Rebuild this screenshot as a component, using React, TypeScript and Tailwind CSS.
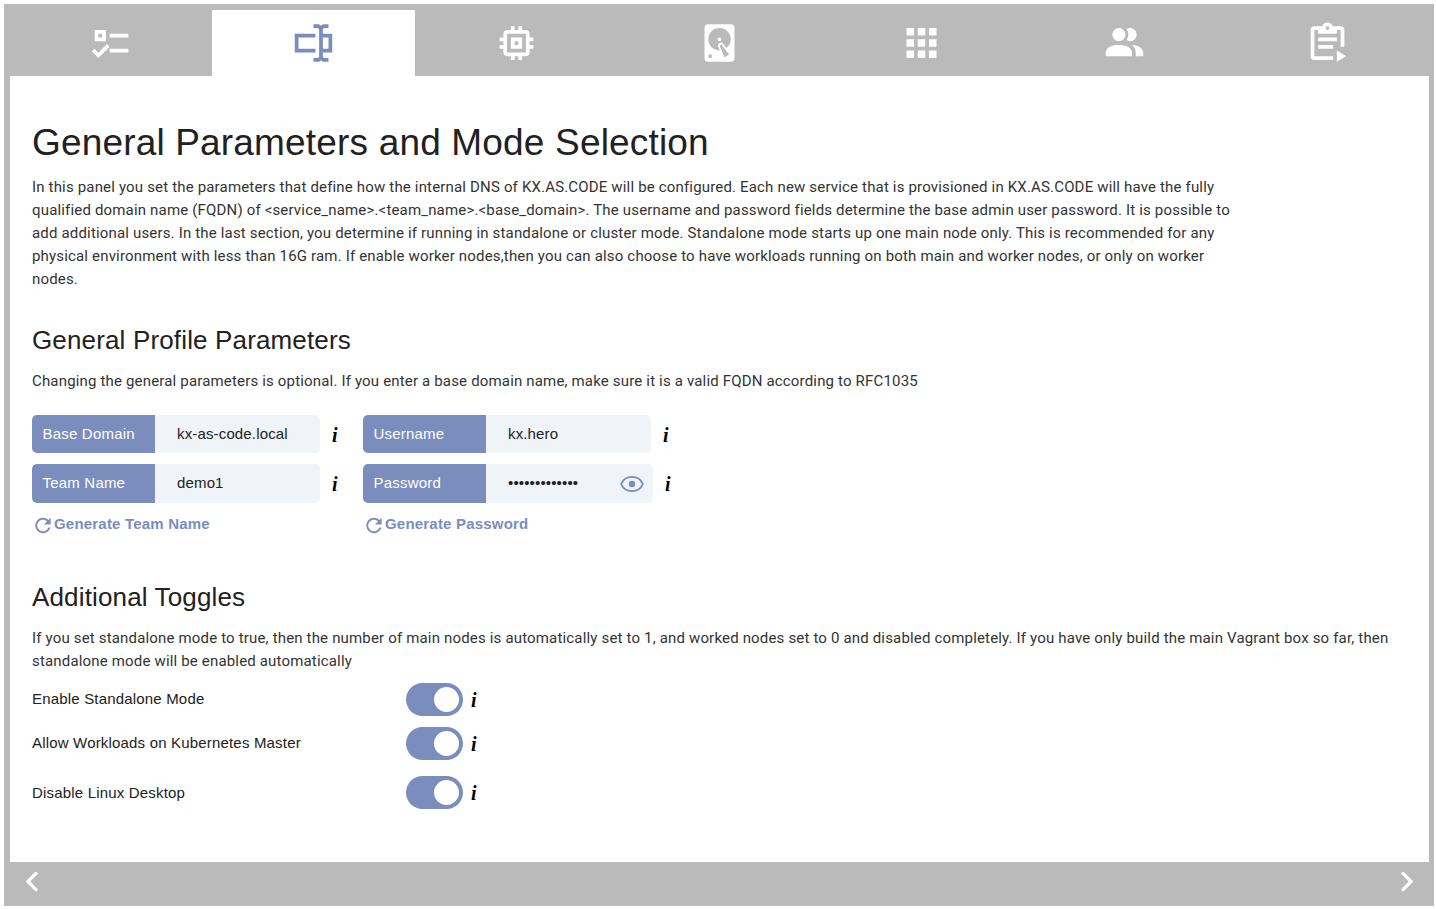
import type { ReactNode } from "react";

const tabs = [
  { name: "prerequisites", path: "M3,5H9V11H3V5M5,7V9H7V7H5M11,7H21V9H11V7M11,15H21V17H11V15M5,20L1.5,16.5L2.91,15.09L5,17.17L9.59,12.59L11,14L5,20Z" },
  { name: "general", path: "M17,7H22V17H17V19A1,1 0 0,0 18,20H20V22H17.5C16.95,22 16,21.55 16,21C16,21.55 15.05,22 14.5,22H12V20H14A1,1 0 0,0 15,19V5A1,1 0 0,0 14,4H12V2H14.5C15.05,2 16,2.45 16,3C16,2.45 16.95,2 17.5,2H20V4H18A1,1 0 0,0 17,5V7M2,7H13V9H4V15H13V17H2V7M20,15V9H17V15H20Z" },
  { name: "resources", path: "M15 9H9v6h6V9zm-2 4h-2v-2h2v2zm8-2V9h-2V7c0-1.1-.9-2-2-2h-2V3h-2v2h-2V3H9v2H7c-1.1 0-2 .9-2 2v2H3v2h2v2H3v2h2v2c0 1.1.9 2 2 2h2v2h2v-2h2v2h2v-2h2c1.1 0 2-.9 2-2v-2h2v-2h-2v-2h2zm-4 6H7V7h10v10z" },
  { name: "storage", path: "M6,2H18A2,2 0 0,1 20,4V20A2,2 0 0,1 18,22H6A2,2 0 0,1 4,20V4A2,2 0 0,1 6,2M12,4A6,6 0 0,0 6,10C6,13.31 8.69,16 12.1,16L11.22,13.77C10.95,13.29 11.11,12.68 11.59,12.4L12.45,11.9C12.93,11.63 13.54,11.79 13.82,12.27L15.74,14.69C17.12,13.59 18,11.9 18,10A6,6 0 0,0 12,4M12,9A1,1 0 0,1 13,10A1,1 0 0,1 12,11A1,1 0 0,1 11,10A1,1 0 0,1 12,9M7,18A1,1 0 0,0 6,19A1,1 0 0,0 7,20A1,1 0 0,0 8,19A1,1 0 0,0 7,18M12.09,13.27L14.58,19.58L17.17,18.08L12.95,12.77L12.09,13.27Z" },
  { name: "applications", path: "M4 8h4V4H4v4zm6 12h4v-4h-4v4zm-6 0h4v-4H4v4zm0-6h4v-4H4v4zm6 0h4v-4h-4v4zm6-10v4h4V4h-4zm-6 4h4V4h-4v4zm6 6h4v-4h-4v4zm0 6h4v-4h-4v4z" },
  { name: "users", path: "M16 17V19H2V17S2 13 9 13 16 17 16 17M12.5 7.5A3.5 3.5 0 1 0 9 11A3.5 3.5 0 0 0 12.5 7.5M15.94 13A5.32 5.32 0 0 1 18 17V19H22V17S22 13.37 15.94 13M15 4A3.39 3.39 0 0 0 13.07 4.59A5 5 0 0 1 13.07 10.41A3.39 3.39 0 0 0 15 11A3.5 3.5 0 0 0 15 4Z" },
  { name: "review", path: "M12 1C10.7 1 9.6 1.84 9.18 3H5A2 2 0 0 0 3 5V19A2 2 0 0 0 5 21H15V19H5V5H7V7H17V5H19V14H21V5A2 2 0 0 0 19 3H14.82C14.4 1.84 13.3 1 12 1M12 3A1 1 0 0 1 12 5A1 1 0 0 1 12 3M7 9H17V11H7V9M7 13H15V15H7V13M17 16V22L22 19L17 16Z" },
];

function Glyph({ d, className }: { d: string; className: string }) {
  return (
    <svg viewBox="0 0 24 24" className={className} fill="currentColor" fillRule="evenodd" aria-hidden="true">
      <path d={d} />
    </svg>
  );
}

function Chevron({ d }: { d: string }) {
  return (
    <svg viewBox="0 0 24 24" className="size-[38px] -translate-y-[0.5px]" fill="none" stroke="currentColor" strokeWidth="2.1" strokeLinecap="round" aria-hidden="true">
      <path d={d} />
    </svg>
  );
}

function Info() {
  return (
    <span className="w-[7px] font-['Liberation_Serif',serif] text-[20px] leading-[22px] font-bold text-black italic">i</span>
  );
}

function Field({ label, children, tall = false, wide = false }: { label: string; children: ReactNode; tall?: boolean; wide?: boolean }) {
  return (
    <div className={tall ? "flex h-[39px] items-center" : "flex h-[38px] items-center"}>
      <div className="flex h-full w-[123px] items-center rounded-l-[5px] bg-[#7b8dbd] pl-[10.5px] tracking-[0.2px] text-white">{label}</div>
      <div className={`flex h-full items-center rounded-r-[5px] bg-[#f0f3f8] pl-[22px] text-[#212121] ${wide ? "w-[167px]" : "w-[165px]"}`}>
        {children}
      </div>
      <span className={tall ? "ml-[12px] flex pt-px" : "ml-[12px] flex pt-[2px]"}><Info /></span>
    </div>
  );
}

function Generate({ children }: { children: ReactNode }) {
  return (
    <button className="mt-[10px] flex h-[23px] items-center font-bold text-[#7b8dbd]">
      <Glyph
        className="mt-px size-[23px] -translate-x-[0.5px]"
        d="M17.65 6.35C16.2 4.9 14.21 4 12 4c-4.42 0-7.99 3.58-7.99 8s3.57 8 7.99 8c3.73 0 6.84-2.55 7.73-6h-2.08c-.82 2.33-3.04 4-5.65 4-3.31 0-6-2.69-6-6s2.69-6 6-6c1.66 0 3.14.69 4.22 1.78L13 11h7V4l-2.35 2.35z"
      />
      <span className="-ml-px tracking-[0.2px]">{children}</span>
    </button>
  );
}

function Toggle({ label, className = "", labelClass = "" }: { label: string; className?: string; labelClass?: string }) {
  return (
    <div className={`flex h-[33px] items-center ${className}`}>
      <span className={`w-[374px] tracking-[0.18px] text-[#212121] ${labelClass}`}>{label}</span>
      <span className="flex h-[33px] w-[57px] items-center justify-end rounded-full bg-[#7b8dbd] pr-[4px]">
        <span className="size-[25px] rounded-full bg-white" />
      </span>
      <span className="ml-[8px] flex"><Info /></span>
    </div>
  );
}

export default function App() {
  return (
    <div className="h-[909px] w-[1436px] bg-white pt-[4px] pl-[4px] font-['Liberation_Sans',sans-serif] text-[15px] tracking-[0.15px] text-[#212121]">
      <div className="flex h-[902px] w-[1430px] flex-col border-t-[6px] border-r-[5px] border-l-[6px] border-[#bababa] bg-white">
        <nav className="flex h-[66px] shrink-0 bg-[#bababa]">
          {tabs.map((t, i) => (
            <div key={t.name} className={`flex items-center justify-center ${i === 0 ? "w-[202px]" : "flex-1"} ${i === 1 ? "bg-white text-[#7b8dbd]" : "text-white"}`}>
              <Glyph d={t.path} className="size-[45px] -translate-y-[0.5px]" />
            </div>
          ))}
        </nav>
        <main className="flex-1 pl-[22px]">
          <h1 className="mt-[43px] text-[37px] leading-[48px] tracking-[0.17px] whitespace-nowrap">General Parameters and Mode Selection</h1>
          <p className="mt-[9px] w-[1230px] font-[Roboto,sans-serif] leading-[23px] tracking-[0.17px] text-[#333]">
            In this panel you set the parameters that define how the internal DNS of KX.AS.CODE will be configured. Each new service that is provisioned in KX.AS.CODE will have the fully<br />
            qualified domain name (FQDN) of &lt;service_name&gt;.&lt;team_name&gt;.&lt;base_domain&gt;. The username and password fields determine the base admin user password. It is possible to<br />
            add additional users. In the last section, you determine if running in standalone or cluster mode. Standalone mode starts up one main node only. This is recommended for any<br />
            physical environment with less than 16G ram. If enable worker nodes,then you can also choose to have workloads running on both main and worker nodes, or only on worker<br />
            nodes.
          </p>
          <h2 className="mt-[34px] text-[26px] leading-[30px]">General Profile Parameters</h2>
          <p className="mt-[15px] font-[Roboto,sans-serif] leading-[23px] tracking-[0.17px] text-[#333]">
            Changing the general parameters is optional. If you enter a base domain name, make sure it is a valid FQDN according to RFC1035
          </p>
          <div className="mt-[22px] flex">
            <div className="w-[331px]">
              <Field label="Base Domain">kx-as-code.local</Field>
              <div className="h-[11px]" />
              <Field label="Team Name" tall>demo1</Field>
              <Generate>Generate Team Name</Generate>
            </div>
            <div>
              <Field label="Username">kx.hero</Field>
              <div className="h-[11px]" />
              <Field label="Password" tall wide>
                <span className="w-[112px]">•••••••••••••</span>
                <svg viewBox="0 0 24 24" className="mt-[1px] size-[24px] text-[#7b8dbd]" fill="none" stroke="currentColor" strokeWidth="1.9" aria-hidden="true">
                  <path d="M1.2 12C3 7.3 7.2 4.9 12 4.9S21 7.3 22.8 12C21 16.7 16.8 19.1 12 19.1S3 16.7 1.2 12Z" />
                  <circle cx="12" cy="12" r="3.2" fill="currentColor" stroke="none" />
                </svg>
              </Field>
              <Generate>Generate Password</Generate>
            </div>
          </div>
          <h2 className="mt-[46px] text-[26px] leading-[30px]">Additional Toggles</h2>
          <p className="mt-[15px] w-[1380px] font-[Roboto,sans-serif] leading-[23px] tracking-[0.17px] text-[#333]">
            If you set standalone mode to true, then the number of main nodes is automatically set to 1, and worked nodes set to 0 and disabled completely. If you have only build the main Vagrant box so far, then<br />
            standalone mode will be enabled automatically
          </p>
          <Toggle label="Enable Standalone Mode" className="mt-[10px]" />
          <Toggle label="Allow Workloads on Kubernetes Master" className="mt-[11px]" />
          <Toggle label="Disable Linux Desktop" className="mt-[16px]" labelClass="pt-[2px]" />
        </main>
        <footer className="flex h-[44px] shrink-0 items-center justify-between bg-[#bababa] px-[3px] pb-[5px] text-white">
          <Chevron d="M14.5 6.9 9.4 12l5.1 5.1" />
          <Chevron d="M9.5 6.9 14.6 12l-5.1 5.1" />
        </footer>
      </div>
    </div>
  );
}
